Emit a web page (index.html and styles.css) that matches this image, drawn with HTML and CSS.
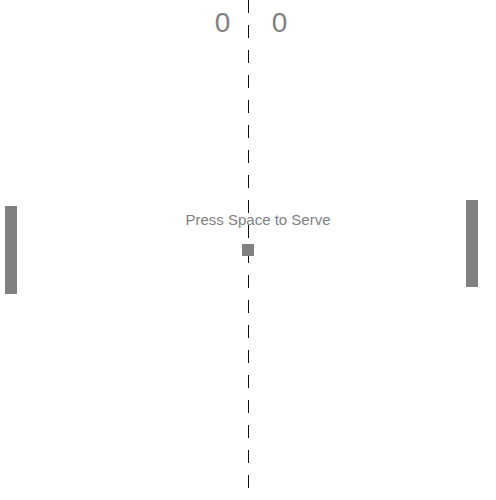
FILE: index.html
```html
<!DOCTYPE html>
<html>
<head>
<meta charset="utf-8">
<link rel="stylesheet" href="styles.css">
</head>
<body>
<div class="court">
  <div class="net"></div>
  <div class="score score-left">0</div>
  <div class="score score-right">0</div>
  <div class="paddle paddle-left"></div>
  <div class="paddle paddle-right"></div>
  <div class="message">Press Space to Serve</div>
  <div class="ball"></div>
</div>
</body>
</html>
```
FILE: styles.css
```css
html, body {
  margin: 0;
  padding: 0;
  background: #ffffff;
}
.court {
  position: relative;
  width: 496px;
  height: 500px;
  overflow: hidden;
  background: #ffffff;
  font-family: "Liberation Sans", Arial, sans-serif;
}
.net {
  position: absolute;
  left: 248px;
  top: 0;
  width: 1px;
  height: 500px;
  background: repeating-linear-gradient(to bottom, #111 0, #111 13px, transparent 13px, transparent 25px);
}
.score {
  position: absolute;
  top: 7px;
  width: 31px;
  text-align: center;
  font-size: 28px;
  line-height: normal;
  color: #808080;
}
.score-left { left: 207px; }
.score-right { left: 264px; }
.paddle {
  position: absolute;
  width: 12px;
  height: 88px;
  background: #808080;
}
.paddle-left { left: 5px; top: 206px; }
.paddle-right { left: 466px; top: 200px; height: 87px; }
.message {
  position: absolute;
  left: 158px;
  top: 211px;
  width: 200px;
  text-align: center;
  font-size: 15px;
  line-height: normal;
  color: #808080;
}
.ball {
  position: absolute;
  left: 242px;
  top: 244px;
  width: 12px;
  height: 12px;
  background: #808080;
}
```
